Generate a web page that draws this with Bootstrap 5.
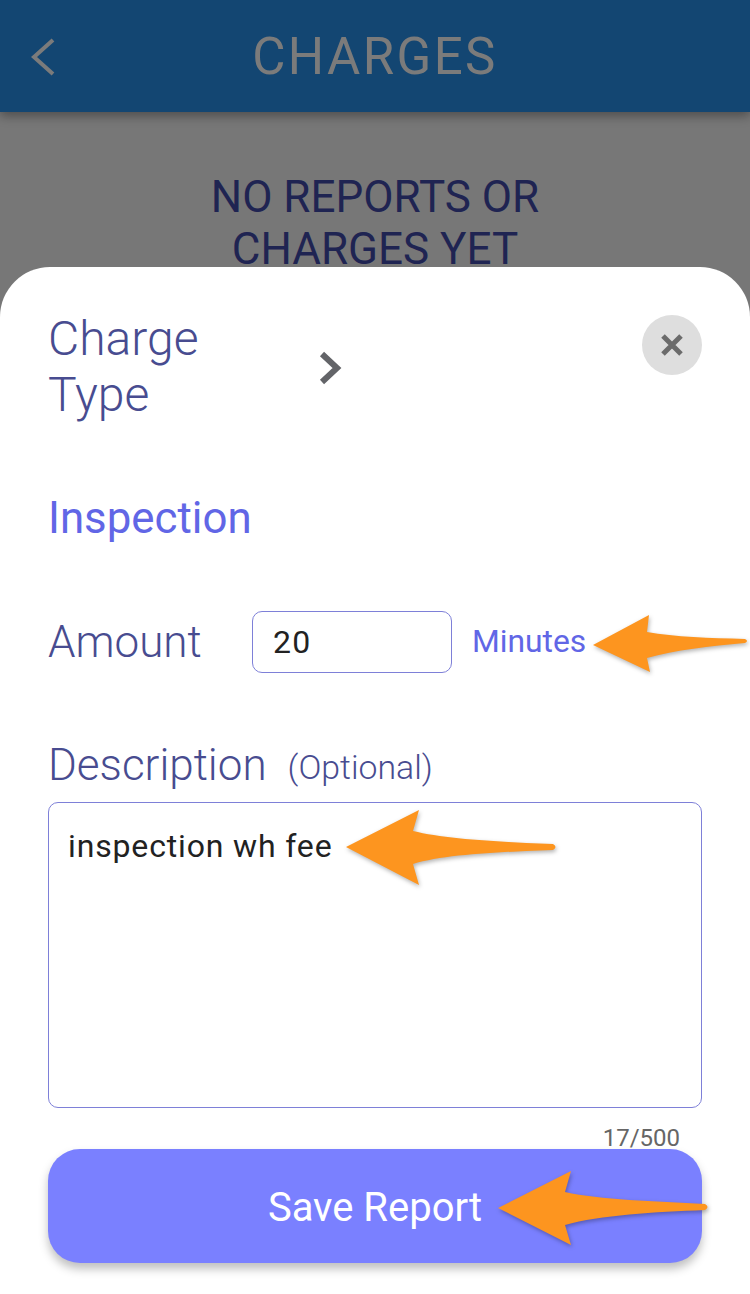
<!DOCTYPE html>
<html lang="en">
<head>
<meta charset="utf-8">
<title>Charges</title>
<link href="https://cdn.jsdelivr.net/npm/bootstrap@5.3.0/dist/css/bootstrap.min.css" rel="stylesheet">
<style>
html,body{margin:0;height:1294px;overflow:hidden;background:#777;font-family:Roboto,"Liberation Sans",sans-serif}
.screen{width:750px;height:1294px;background:#777}
.topbar{height:112px;background:#134672;box-shadow:0 4px 10px rgba(0,0,0,.35);color:#7b7b7b}
.back-ico{left:30px;top:38px;width:28px;height:38px}
.bar-title{font-size:51px;font-weight:400;line-height:1;letter-spacing:2.4px}
.empty-msg{padding-top:59px;font-size:44px;line-height:52px;color:#1f2452;text-align:center}
.sheet{left:0;right:0;top:267px;bottom:0;background:#fff;border-radius:50px 50px 0 0;padding:44px 48px 0}
.lbl{color:#484c90;font-weight:300;font-size:44px;line-height:56px}
.type-col{width:270px;font-size:48px}
.chev{width:24px;height:34px;margin-top:40px}
.close-x{width:60px;height:60px;background:#dedede;border:0;border-radius:50%;padding:0;right:48px;top:48px}
.selected{color:#6166e6;font-size:43.8px;line-height:52px;margin-top:69px}
.amount-row{margin-top:67px;height:62px}
.amount-lbl{width:204px}
.amt-input{width:200px;height:62px;font-size:32px;letter-spacing:1.3px;border:1px solid #7e80d8;border-radius:10px;padding:0 20px;color:#222;box-shadow:none}
.unit{color:#6166e6;font-size:31.8px;margin-left:20px}
.desc-row{margin-top:64px;height:56px}
.opt{font-size:33.8px;color:#484c90;font-weight:300;margin-left:21px;padding-top:6px}
.desc-box{height:306px;margin-top:9px;font-size:32px;letter-spacing:.85px;border:1px solid #7e80d8;border-radius:10px;padding:19px 19px;color:#222;resize:none;box-shadow:none}
.counter{font-size:24px;color:#666;line-height:28px;text-align:right;padding-right:22px;margin-top:16px;height:25px}
.save{height:114px;width:100%;background:#7a80ff;border:0;border-radius:32px;color:#fff;font-size:40px;padding-top:10px;box-shadow:0 6px 10px rgba(0,0,0,.25)}
.arrows{left:0;top:0;width:750px;height:1294px;pointer-events:none}
.arr{fill:#fd951f;filter:drop-shadow(1px 2px 2px rgba(0,0,0,.3))}
</style>
</head>
<body>
<div class="screen position-relative overflow-hidden">
  <header class="topbar position-relative d-flex align-items-center justify-content-center">
    <svg class="back-ico position-absolute" viewBox="0 0 28 38"><path d="M23 2 4 19l19 17" fill="none" stroke="#7b7b7b" stroke-width="4"/></svg>
    <div class="bar-title">CHARGES</div>
  </header>
  <div class="empty-msg">NO REPORTS OR<br>CHARGES YET</div>
  <section class="sheet position-absolute">
    <div class="d-flex">
      <div class="lbl type-col">Charge<br>Type</div>
      <svg class="chev" viewBox="0 0 24 34"><path d="M4 3l15 14L4 31" fill="none" stroke="#636468" stroke-width="6"/></svg>
    </div>
    <button class="close-x position-absolute d-flex align-items-center justify-content-center" aria-label="Close"><svg width="24" height="24" viewBox="0 0 24 24"><path d="M3 3l18 18M21 3 3 21" stroke="#6b6b6b" stroke-width="5" fill="none"/></svg></button>
    <div class="selected">Inspection</div>
    <div class="amount-row d-flex align-items-center">
      <div class="lbl amount-lbl">Amount</div>
      <input class="form-control amt-input" value="20">
      <div class="unit">Minutes</div>
    </div>
    <div class="desc-row d-flex align-items-center"><span class="lbl">Description</span><span class="opt">(Optional)</span></div>
    <textarea class="form-control desc-box">inspection wh fee</textarea>
    <div class="counter">17/500</div>
    <button class="btn save">Save Report</button>
  </section>
  <svg class="arrows position-absolute" viewBox="0 0 750 1294">
    <path class="arr" d="M593 645 649 615 647 632C675 637 710 638 745 639Q749 641 745 643C710 646 675 650 647 658L650 672Z"/>
    <path class="arr" d="M346 847 419 810 413 831C445 839 500 842 553 844Q558 847 553 850C500 852 445 854 413 864L419 885Z"/>
    <path class="arr" d="M498 1208 571 1171 565 1192C600 1200 655 1201 705 1204Q710 1207 705 1210C655 1212 600 1215 565 1225L571 1245Z"/>
  </svg>
</div>
</body>
</html>
